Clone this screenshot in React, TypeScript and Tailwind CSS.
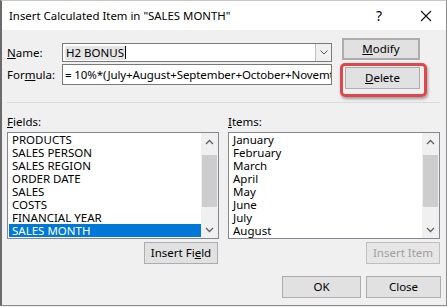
import React from "react";

const font = { fontFamily: '"Noto Sans", "Open Sans", sans-serif' };

function Btn({ children, className = "", disabled = false }: { children: React.ReactNode; className?: string; disabled?: boolean }) {
  return (
    <div
      className={`flex items-center justify-center bg-[#e1e1e1] border border-[#adadad] text-[11.5px] leading-none ${disabled ? "text-[#a0a0a0] border-[#bfbfbf] bg-[#e6e6e6]" : "text-black"} ${className}`}
    >
      {children}
    </div>
  );
}

function ScrollBar() {
  return (
    <div className="w-[17px] h-full flex flex-col bg-[#f0f0f0]">
      <div className="h-[17px] flex items-center justify-center">
        <svg width="9" height="6" viewBox="0 0 9 6"><path d="M1 5 L4.5 1.5 L8 5" stroke="#606060" strokeWidth="1.3" fill="none" /></svg>
      </div>
      <div className="h-[5px]" />
      <div className="h-[52px] bg-[#cdcdcd] mx-[1px]" />
      <div className="flex-1" />
      <div className="h-[17px] flex items-center justify-center">
        <svg width="9" height="6" viewBox="0 0 9 6"><path d="M1 1 L4.5 4.5 L8 1" stroke="#606060" strokeWidth="1.3" fill="none" /></svg>
      </div>
    </div>
  );
}

function ListBox({ items, selected }: { items: string[]; selected?: number }) {
  return (
    <div className="h-[107px] border border-[#828790] bg-white flex">
      <div className="flex-1 pt-0 pl-[1px] pr-0 overflow-hidden">
        {items.map((it, i) => (
          <div
            key={it}
            className={`h-[13px] leading-[13px] text-[11.5px] pl-[3px] whitespace-nowrap ${i === selected ? "bg-[#0078d7] text-white" : "text-black"}`}
          >
            {it}
          </div>
        ))}
      </div>
      <ScrollBar />
    </div>
  );
}

export default function App() {
  return (
    <div className="w-[447px] h-[307px] flex flex-col bg-[#f0f0f0]" style={font}>
      <div className="w-[447px] h-[306px] flex flex-col border-l-2 border-r border-b border-t border-l-[#6b6b6b] border-r-[#8a8a8a] border-b-[#8a8a8a] border-t-[#c8c8c8]">
        {/* Title bar */}
        <div className="h-[29px] bg-white flex items-center pl-[7px] pr-[14px] text-[11.4px] text-black">
          <span className="flex-1">Insert Calculated Item in "SALES MONTH"</span>
          <span className="w-[14px] text-center text-[14px] mr-[34px]">?</span>
          <svg width="12" height="12" viewBox="0 0 12 12"><path d="M1 1 L11 11 M11 1 L1 11" stroke="#111" strokeWidth="1.1" /></svg>
        </div>

        {/* Body */}
        <div className="flex-1 flex flex-col pl-[5px] pr-[5px] text-[11.5px] text-black">
          {/* Top section */}
          <div className="flex pt-[8px]">
            <div className="flex flex-col w-[325px] pt-[5px] gap-[2px]">
              <div className="flex items-center">
                <span className="w-[55px]"><u>N</u>ame:</span>
                <div className="w-[270px] h-[19px] bg-white border border-[#7a7a7a] flex items-center">
                  <div className="flex-1 flex items-center pl-[2px]">
                    <span className="bg-[#e5e5e5] px-[1px] leading-[14px]">H2 BONUS</span>
                    <span className="w-[1px] h-[13px] bg-black" />
                  </div>
                  <div className="w-[16px] h-full border-l border-[#c0c0c0] bg-[#f0f0f0] flex items-center justify-center">
                    <svg width="8" height="5" viewBox="0 0 8 5"><path d="M0.5 0.5 L4 4 L7.5 0.5" stroke="#555" strokeWidth="1" fill="none" /></svg>
                  </div>
                </div>
              </div>
              <div className="flex items-center">
                <span className="w-[55px]">For<u>m</u>ula:</span>
                <div className="w-[270px] h-[21px] bg-white border border-[#7a7a7a] flex items-center pl-[2px] overflow-hidden whitespace-nowrap tracking-[-0.1px]">
                  = 10%*(July+August+September+October+Novemt
                </div>
              </div>
            </div>
            <div className="flex flex-col ml-[10px] gap-[7px] relative">
              <Btn className="w-[78px] h-[22px] border-2 border-[#0078d7]"><span><u>M</u>odify</span></Btn>
              <Btn className="w-[75px] h-[22px] ml-[3px]"><span><u>D</u>elete</span></Btn>
              <div className="absolute left-[-2px] top-[25px] w-[87px] h-[34px] border-[3px] border-[#e0474c] rounded-[5px] shadow-[1px_2px_3px_rgba(0,0,0,0.35)]" />
            </div>
          </div>

          {/* Separator */}
          <div className="mt-[13px] h-[1px] w-[433px] bg-[#dadada]" />

          {/* Lists */}
          <div className="flex mt-[11px] gap-[9px]">
            <div className="w-[212px] flex flex-col">
              <div className="h-[16px] leading-[16px]"><u>F</u>ields:</div>
              <div className="mt-[2px]">
                <ListBox
                  items={["PRODUCTS", "SALES PERSON", "SALES REGION", "ORDER DATE", "SALES", "COSTS", "FINANCIAL YEAR", "SALES MONTH"]}
                  selected={7}
                />
              </div>
              <div className="flex justify-end mt-[3px] pr-[1px]">
                <Btn className="w-[74px] h-[22px]"><span>Insert Fi<u>e</u>ld</span></Btn>
              </div>
            </div>
            <div className="w-[212px] flex flex-col">
              <div className="h-[16px] leading-[16px]"><u>I</u>tems:</div>
              <div className="mt-[2px]">
                <ListBox items={["January", "February", "March", "April", "May", "June", "July", "August"]} />
              </div>
              <div className="flex justify-end mt-[3px]">
                <Btn className="w-[74px] h-[22px]" disabled>Insert Item</Btn>
              </div>
            </div>
          </div>

          {/* Bottom buttons */}
          <div className="flex justify-end gap-[5px] mt-[12px]">
            <Btn className="w-[79px] h-[22px]">OK</Btn>
            <Btn className="w-[75px] h-[22px]">Close</Btn>
          </div>
        </div>
      </div>
    </div>
  );
}
